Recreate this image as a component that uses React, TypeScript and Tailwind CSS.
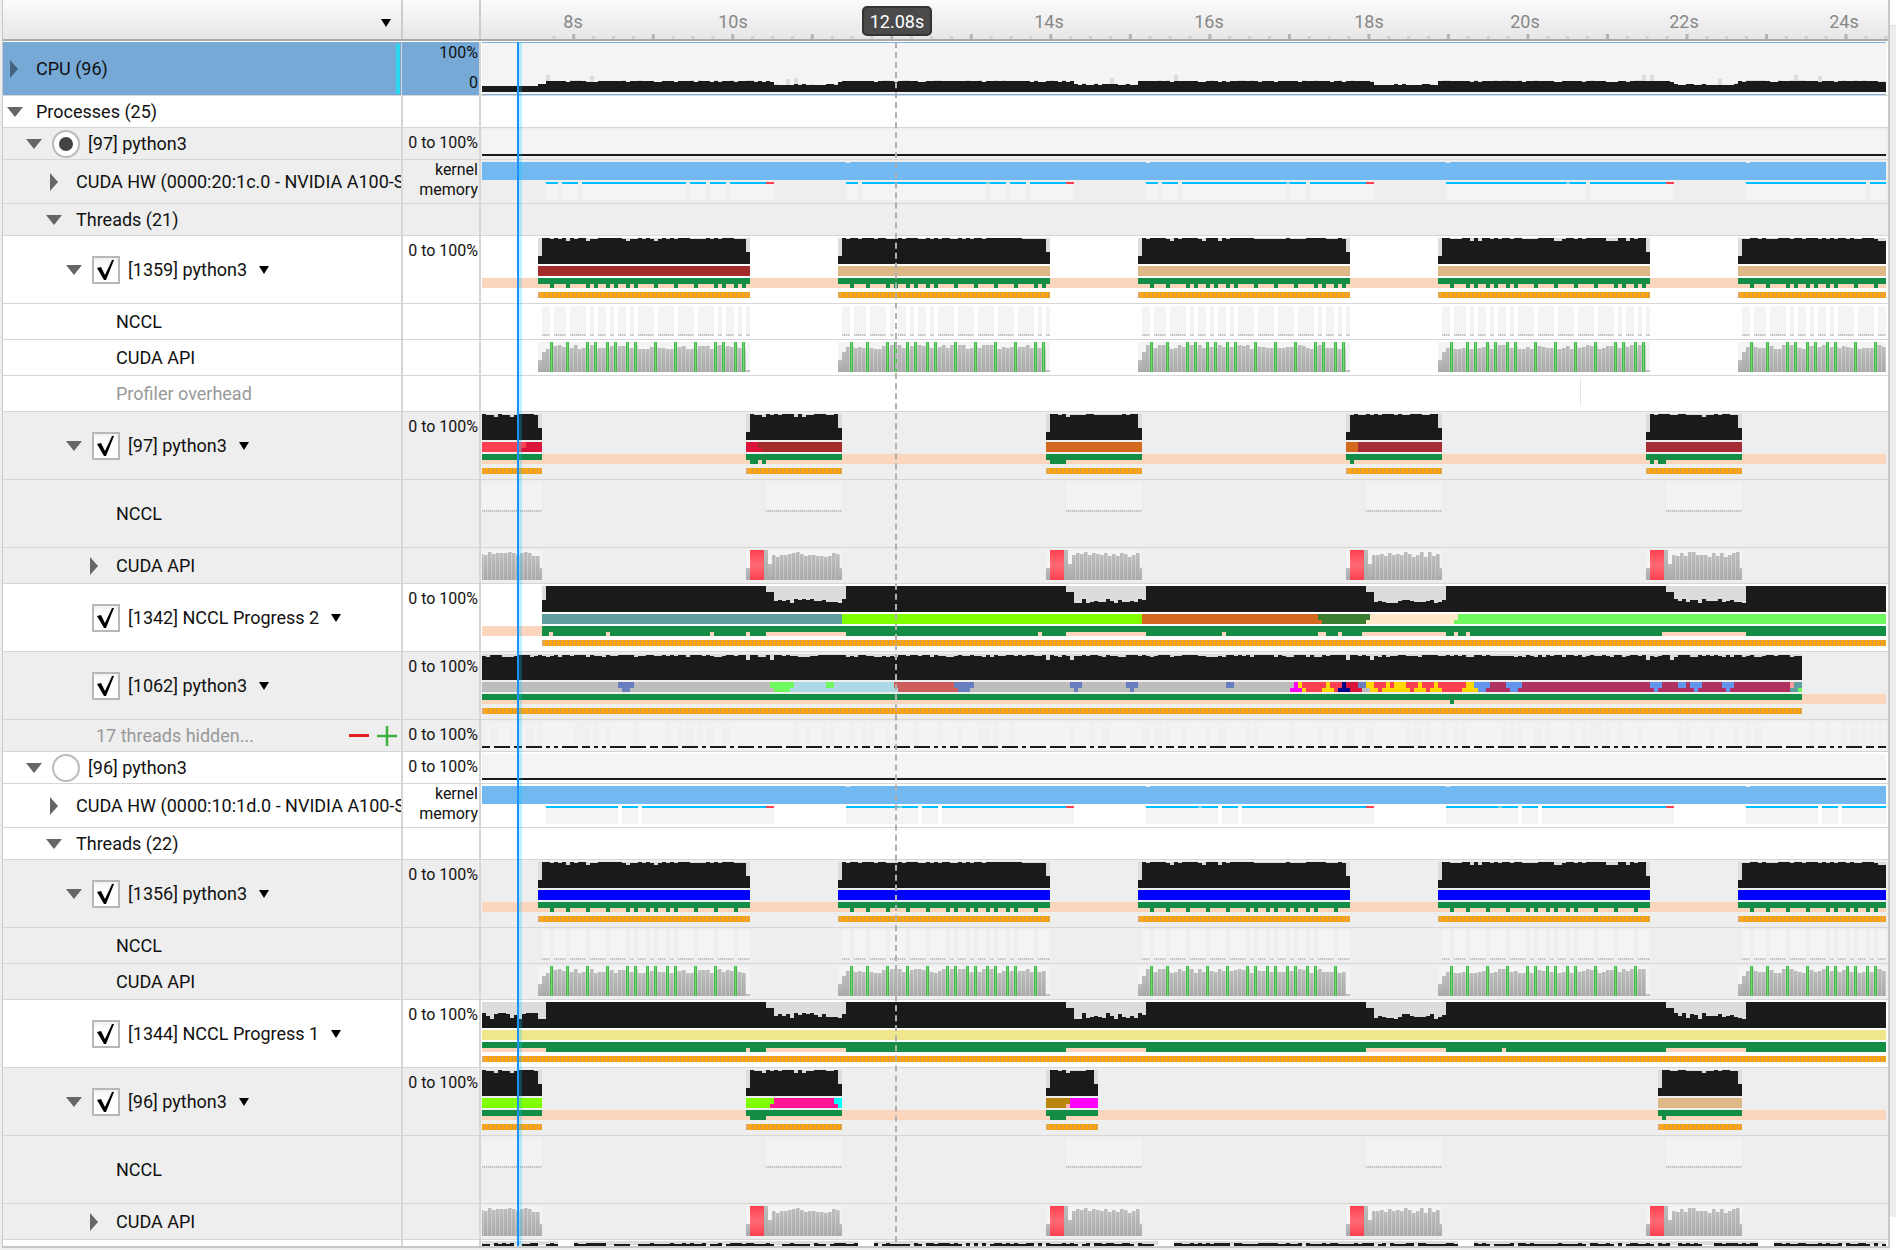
import type { ReactNode } from 'react'

type Rect = { x: number; y: number; w: number; h: number; fill: string }
type Span = [number, number, string]

const BLACK = '#1a1a1a'
const SHADE = '#dcdcdc'
const LIGHT = '#f4f4f4'
const GREEN = '#138d46'
const PEACH = '#fcd6bc'
const STEEL = '#6a7fc0'
const CORN = '#6495ed'
const MAROON = '#b03060'
const RED = '#ff4050'
const GOLD = '#ffd700'
const CRIMSON = '#dc143c'
const GRAY = '#bdbdbd'
const LEFT = 482
const RIGHT = 1886

const rnd = (i: number) => {
  const v = Math.sin(i * 12.9898) * 43758.5453
  return v - Math.floor(v)
}
const box = (x1: number, x2: number, y: number, h: number, fill: string): Rect => ({ x: x1, y, w: x2 - x1, h, fill })

// --- cols shared by NCCL / CUDA / green ticks ---
const colsFrom = (s: number, e: number, widths: number[]) => {
  const cols: [number, number][] = []
  let x = s + 4
  let i = 0
  while (x < e) {
    const w = widths[i % widths.length]
    cols.push([x, Math.min(x + w, e)])
    x += w + 4
    i++
  }
  return cols
}
const gapsOf = (cols: [number, number][]) => cols.slice(0, -1).map(([, end]) => end)

const W_A = [8, 12, 16, 4, 8, 4, 8, 4, 16, 16, 16, 16, 16, 4, 4]
const W_B = [8, 12, 4, 8, 4, 8, 4, 16, 16, 16, 16, 16, 4, 8, 4, 4]
const W_C = [8, 12, 16, 4, 8, 4, 8, 4, 16, 16, 16, 16, 4, 8, 4, 4]
const W_D = [8, 12, 16, 16, 16, 16, 4, 8, 4, 8, 4, 8, 4, 16, 12]
const W_E = [8, 12, 16, 16, 16, 4, 8, 4, 8, 4, 16, 16, 16, 12]

const LONG_BURSTS: [number, number, number[]][] = [
  [538, 750, W_C],
  [838, 1050, W_A],
  [1138, 1350, W_C],
  [1438, 1650, W_B],
  [1738, 1950, W_C],
]
const LONG_BURSTS_B: [number, number, number[]][] = [
  [538, 750, W_E],
  [838, 1050, W_D],
  [1138, 1350, W_D],
  [1438, 1650, W_E],
  [1738, 1950, W_E],
]
const SHORT_STARTS = [446, 746, 1046, 1346, 1646]

// --- pieces of a thread track ---
const blackBurst = (s: number, e: number) => {
  const out: Rect[] = [box(s, e, 2, 26, SHADE), box(s, s + 4, 20, 8, BLACK), box(e - 4, e, 16, 12, BLACK)]
  for (let x = s + 4; x < e - 4; x += 4) {
    const n = rnd(x)
    const top = n > 0.92 ? 5 : n > 0.45 ? 3 : 2
    out.push(box(x, x + 4, top, 28 - top, BLACK))
  }
  return out
}

const orange = (x1: number, x2: number) => {
  const out: Rect[] = [box(x1, x2, 56, 6, '#ffa50a')]
  for (let x = x1 - (x1 % 4) + 4; x < x2; x += 4) out.push(box(x, x + 1, 56, 6, '#c89c5c'))
  out.push(box(x1, x1 + 3, 56, 6, '#e0a850'))
  return out
}

const greenTicks = (s: number, e: number, ticks: number[]) => [
  box(s, e, 42, 6, GREEN),
  ...ticks.map((t) => box(t, t + 4, 48, 4, GREEN)),
]

const greenGaps = (x1: number, x2: number, gaps: [number, number][]) => {
  const out: Rect[] = [box(x1, x2, 42, 10, GREEN)]
  gaps.forEach(([a, b]) => out.push(box(a, b, 48, 4, PEACH)))
  return out
}

const peach = () => [box(LEFT, RIGHT, 42, 10, PEACH)]

const twoLevel = (top: Span[], bottom: Span[]) => [
  ...top.map(([a, b, c]) => box(a, b, 30, 6, c)),
  ...bottom.map(([a, b, c]) => box(a, b, 36, 4, c)),
]
const slice = (a: number, b: number, c: string) => box(a, b, 30, 10, c)

const dips = (starts: number[], jagTop: number, jagRange: number) => {
  const out: Rect[] = []
  starts.forEach((s) => {
    out.push(box(s, s + 80, 2, 26, SHADE))
    out.push(box(s, s + 8, 8, 20, BLACK))
    for (let x = s + 8; x < s + 80; x += 4) {
      const top = jagTop + Math.floor(rnd(x * 3) * jagRange)
      out.push(box(x, x + 4, top, 28 - top, BLACK))
    }
  })
  return out
}

// --- whole tracks ---
const longThread = (bursts: [number, number, number[]][], colors: string[]): Rect[] => {
  const out: Rect[] = peach()
  bursts.forEach(([s, e, widths], i) => {
    out.push(...blackBurst(s, e), slice(s, e, colors[i]))
    out.push(...greenTicks(s, e, gapsOf(colsFrom(s, e, widths))))
    out.push(...orange(s, Math.min(e, RIGHT)))
  })
  return out
}

const dots = (a: number, b: number) => {
  const out: Rect[] = [box(a, b, 30, 2, '#e2e2e2')]
  for (let x = a; x < b; x += 2) out.push(box(x, x + 1, 30, 2, '#c0c0c0'))
  return out
}

const ncclCols = (bursts: [number, number, number[]][]): Rect[] => {
  const out: Rect[] = []
  bursts.forEach(([s, e, widths]) => {
    colsFrom(s, e, widths).forEach(([a, b]) => {
      out.push(box(a, b, 2, 28, LIGHT), ...dots(a, b))
    })
  })
  return out
}

const grayBars = (a: number, b: number, minTop: number, range: number) => {
  const out: Rect[] = []
  for (let x = a; x < b; x += 4) {
    const top = minTop + Math.floor(rnd(x * 7) * range)
    out.push({ x, y: top, w: 3, h: 32 - top, fill: 'url(#barGrad)' })
    out.push({ x: x + 3, y: top, w: 1, h: 32 - top, fill: 'url(#barGradSoft)' })
  }
  return out
}

const cudaLong = (bursts: [number, number, number[]][]): Rect[] => {
  const out: Rect[] = []
  bursts.forEach(([s, e, widths]) => {
    out.push(box(s, e, 2, 30, LIGHT))
    out.push({ x: s, y: 20, w: 4, h: 12, fill: 'url(#barGrad)' })
    out.push({ x: s + 4, y: 12, w: 4, h: 20, fill: 'url(#barGrad)' })
    out.push(...grayBars(s + 8, e - 4, 5, 5))
    out.push(box(e - 4, e, 30, 2, '#c0c0c0'))
    gapsOf(colsFrom(s, e, widths)).forEach((g) => {
      out.push(box(g, g + 3, 2, 30, '#46b44e'), box(g + 1, g + 2, 2, 30, '#6cdc6c'))
    })
  })
  return out
}

const cudaShort = (): Rect[] => {
  const out: Rect[] = []
  SHORT_STARTS.forEach((s) => {
    const e = s + 96
    out.push(box(s, e, 2, 30, LIGHT))
    out.push({ x: s, y: 20, w: 4, h: 12, fill: 'url(#barGrad)' })
    out.push({ x: s + 18, y: 2, w: 4, h: 30, fill: 'url(#barGrad)' })
    out.push({ x: s + 22, y: 16, w: 4, h: 16, fill: 'url(#barGrad)' })
    out.push(...grayBars(s + 26, e - 4, 4, 6))
    out.push({ x: e - 4, y: 20, w: 4, h: 12, fill: 'url(#barGrad)' })
    out.push({ x: s + 4, y: 2, w: 14, h: 30, fill: 'url(#redGrad)' })
  })
  return out
}

const ncclShort = (starts: number[]): Rect[] => {
  const out: Rect[] = []
  starts.forEach((s) => {
    const a = s + 20
    const e = s + 96
    out.push(box(a, e, 2, 28, '#f2f2f2'), ...dots(a, e))
  })
  return out
}

const memSpans = (pattern: [number, number][], red: [number, number][], spots: number[]) => {
  const out: Rect[] = [box(LEFT, RIGHT, 2, 18, '#72b9f2')]
  ;[846, 1146, 1446, 1746].forEach((x) => out.push(box(x, x + 4, 2, 1, '#e4eef6')))
  pattern.forEach(([a, b]) => {
    out.push(box(a, b, 24, 16, LIGHT), box(a, b, 22, 2, '#00bfff'))
  })
  red.forEach(([a, b]) => out.push(box(a, b, 24, 16, LIGHT), box(a, b, 22, 2, RED)))
  spots.forEach((x) => out.push(box(x, x + 4, 22, 2, '#6fd0e0')))
  return out
}

const MEM_97: [number, number][] = [
  [546, 558], [562, 578], [582, 686], [690, 706], [710, 726], [730, 766],
  [846, 858], [862, 986], [990, 1006], [1010, 1026], [1030, 1066],
  [1146, 1158], [1162, 1178], [1182, 1286], [1290, 1306], [1310, 1366],
  [1446, 1586], [1590, 1666],
  [1746, 1866], [1870, 1886],
]
const MEM_96: [number, number][] = [
  [546, 618], [622, 638], [642, 766],
  [846, 918], [922, 938], [942, 1066],
  [1146, 1218], [1222, 1238], [1242, 1366],
  [1446, 1518], [1522, 1538], [1542, 1666],
  [1746, 1818], [1822, 1838], [1842, 1886],
]
const MEM_RED: [number, number][] = [[766, 774], [1066, 1074], [1366, 1374], [1666, 1674]]

const cpuTrack = (): Rect[] => {
  const out: Rect[] = [
    box(481, 1887, 0, 1, '#7db0dd'),
    box(481, 1887, 52, 1, '#7db0dd'),
    box(LEFT, RIGHT, 1, 51, LIGHT),
    box(481, 482, 0, 53, '#7db0dd'),
    box(1886, 1887, 0, 53, '#7db0dd'),
  ]
  for (let x = LEFT; x < RIGHT; x += 4) {
    const phase = (x - 538 + 600) % 300
    const n = rnd(x)
    const h = x < 538 ? 6 : x < 546 ? 8 : phase < 236 ? (n > 0.8 ? 10 : 11) : n > 0.7 ? 8 : 7
    const m = rnd(x * 5)
    const extra = x < 546 ? 0 : m > 0.985 ? 6 : m > 0.7 ? 1 : 0
    out.push(box(x, x + 4, 50 - h - extra, extra, SHADE), box(x, x + 4, 50 - h, h, BLACK))
  }
  return out
}

const processLine = (y: number): Rect[] => [box(LEFT, RIGHT, 2, y - 2, LIGHT), box(LEFT, RIGHT, y, 2, BLACK)]

const hiddenTrack = (): Rect[] => {
  const out: Rect[] = [box(LEFT, RIGHT, 2, 28, '#f3f3f3')]
  for (let x = LEFT; x < RIGHT; x += 4) if (rnd(x * 2) > 0.7) out.push(box(x, x + 4, 2, 24, '#f0f0f0'))
  let x = LEFT
  let i = 0
  while (x < RIGHT) {
    const w = rnd(i) > 0.55 ? 16 : rnd(i) > 0.25 ? 4 : 8
    out.push(box(x, x + w, 26, 2, BLACK))
    x += w + 4
    i++
  }
  return out
}

const bottomTrack = (): Rect[] => {
  const out: Rect[] = []
  for (let x = LEFT; x < RIGHT; x += 4) {
    const n = rnd(x * 11)
    if ((x + 300 * 9 - 1458) % 300 < 16) continue
    out.push(box(x, x + 4, 1, 4, SHADE))
    if (n > 0.15) out.push(box(x, x + 4, n > 0.6 ? 3 : 4, n > 0.6 ? 3 : 2, BLACK))
  }
  return out
}

// [1062] python3 slices are read off the picture
const z = (v: number) => 1220 + v / 3
const chain = (start: number, stops: [number, string][]): Span[] => {
  let prev = start
  return stops.map(([end, c]) => {
    const s: Span = [z(prev), z(end), c]
    prev = end
    return s
  })
}
const TOP_1062: Span[] = [
  [482, 1294, GRAY], [618, 634, STEEL], [770, 794, '#70f85f'], [794, 896, '#add8e6'], [826, 834, '#70f85f'],
  [894, 954, '#cd5c5c'], [954, 974, STEEL], [1070, 1082, STEEL], [1126, 1138, STEEL], [1226, 1234, STEEL],
  ...chain(222, [[234, '#ff00ff'], [246, GOLD], [318, RED], [330, GOLD], [366, RED], [378, '#00008b'], [414, CRIMSON], [438, STEEL],
    [462, GOLD], [498, RED], [510, GOLD], [522, RED], [558, GOLD], [594, RED], [606, GOLD], [642, RED], [654, GOLD], [738, RED], [762, GOLD],
    [810, CORN], [858, MAROON], [906, CORN], [1290, MAROON], [1326, CORN], [1374, MAROON], [1398, CORN], [1410, MAROON], [1446, CORN], [1506, MAROON], [1542, CORN]]),
  [1734, 1790, MAROON], [1790, 1794, '#ff9aa2'], [1794, 1802, '#5f9ea0'],
]
const BOTTOM_1062: Span[] = [
  [482, 1290, GRAY], [622, 630, STEEL], [774, 790, '#70f85f'], [790, 898, '#add8e6'], [898, 958, '#cd5c5c'], [958, 970, STEEL],
  [1074, 1078, STEEL], [1130, 1134, STEEL],
  ...chain(210, [[246, '#ff00ff'], [258, GOLD], [306, RED], [342, GOLD], [354, RED], [390, '#00008b'], [426, CRIMSON], [450, GRAY],
    [474, GOLD], [486, RED], [570, GOLD], [582, RED], [618, GOLD], [630, RED], [666, GOLD], [726, RED], [774, GOLD],
    [798, CORN], [870, MAROON], [894, CORN], [1302, MAROON], [1314, CORN], [1422, MAROON], [1434, CORN], [1518, MAROON], [1530, CORN]]),
  [1730, 1790, MAROON], [1790, 1798, '#5f9ea0'], [1798, 1802, '#70f85f'],
]

const track1062 = (): Rect[] => {
  const out: Rect[] = [box(LEFT, 1802, 2, 26, SHADE)]
  for (let x = LEFT; x < 1802; x += 4) {
    const n = rnd(x * 9)
    const dip = (x - 446) % 300 === 0 || (x - 470) % 300 === 0
    const top = dip ? 8 : n > 0.6 ? 3 : n > 0.25 ? 4 : 5
    out.push(box(x, x + 4, top, 28 - top, BLACK))
  }
  out.push(...twoLevel(TOP_1062, BOTTOM_1062), ...peach(), box(LEFT, 1802, 42, 6, GREEN), box(1450, 1454, 48, 4, GREEN), ...orange(LEFT, 1802))
  return out
}

const track1342 = (): Rect[] => [
  ...peach(),
  box(542, RIGHT, 2, 26, BLACK),
  box(542, 546, 2, 14, SHADE),
  ...dips([766, 1066, 1366, 1666], 15, 5),
  ...twoLevel(
    [[542, 842, '#5f9ea0'], [842, 1142, '#7fff00'], [1142, 1318, '#d2691e'], [1318, 1370, '#3a7d2f'], [1370, 1458, '#ffe8c8'], [1458, RIGHT, '#70f85f']],
    [[542, 842, '#5f9ea0'], [842, 1142, '#7fff00'], [1142, 1322, '#d2691e'], [1322, 1366, '#3a7d2f'], [1366, 1454, '#ffe8c8'], [1454, RIGHT, '#70f85f']],
  ),
  ...greenGaps(542, RIGHT, [[549, 553], [606, 610], [710, 714], [746, 750], [766, 846], [1038, 1042], [1066, 1146], [1222, 1226], [1318, 1326], [1338, 1342], [1362, 1446], [1454, 1458], [1466, 1470], [1662, 1746]]),
  ...orange(542, RIGHT),
]

const track1344 = (): Rect[] => [
  box(LEFT, RIGHT, 2, 26, BLACK),
  box(LEFT, 546, 2, 26, SHADE),
  ...dips([466, 766, 1066, 1366, 1666], 13, 7),
  slice(LEFT, RIGHT, '#f0e68c'),
  ...greenGaps(LEFT, RIGHT, [[482, 546], [746, 750], [766, 846], [1066, 1146], [1366, 1446], [1502, 1506], [1666, 1746]]),
  ...orange(LEFT, RIGHT),
]

const track97 = (): Rect[] => [
  ...peach(),
  ...SHORT_STARTS.flatMap((s) => [...blackBurst(s, s + 96), ...orange(s, s + 96), box(s, s + 96, 42, 6, GREEN)]),
  ...twoLevel(
    [[446, 526, RED], [526, 542, CRIMSON], [746, 758, CRIMSON], [758, 842, '#a52a2a'], [1046, 1142, '#d2691e'], [1346, 1358, '#d2691e'], [1358, 1442, '#a82c36'], [1646, 1742, '#a82c36']],
    [[446, 521, RED], [521, 542, CRIMSON], [746, 762, CRIMSON], [762, 842, '#a52a2a'], [1046, 1142, '#d2691e'], [1346, 1358, '#d2691e'], [1358, 1442, '#a82c36'], [1646, 1742, '#a82c36']],
  ),
  box(750, 758, 48, 4, GREEN), box(762, 766, 48, 4, GREEN), box(1050, 1066, 48, 4, GREEN),
  box(1350, 1354, 48, 4, GREEN), box(1650, 1654, 48, 4, GREEN), box(1658, 1666, 48, 4, GREEN),
]

const track96 = (): Rect[] => {
  const bursts: [number, number][] = [[446, 542], [746, 842], [1046, 1098], [1658, 1742]]
  return [
    ...peach(),
    ...bursts.flatMap(([s, e]) => [...blackBurst(s, e), ...orange(s, e), box(s, e, 42, 6, GREEN)]),
    ...twoLevel(
      [[446, 542, '#7fff00'], [746, 774, '#7fff00'], [774, 834, '#ff1493'], [834, 842, '#00ffff'], [1046, 1070, '#b8860b'], [1070, 1098, '#ff00ff'], [1658, 1742, '#deb887']],
      [[446, 542, '#7fff00'], [746, 770, '#7fff00'], [770, 838, '#ff1493'], [838, 842, '#00ffff'], [1046, 1066, '#b8860b'], [1066, 1070, '#ffb6c1'], [1070, 1098, '#ff00ff'], [1658, 1742, '#deb887']],
    ),
    box(750, 766, 48, 4, GREEN), box(1050, 1066, 48, 4, GREEN), box(1662, 1666, 48, 4, GREEN),
  ]
}

const TRACKS = {
  cpu: cpuTrack(),
  hidden: hiddenTrack(),
  bottom: bottomTrack(),
  t1359: longThread(LONG_BURSTS, ['#a52a2a', '#deb887', '#deb887', '#deb887', '#deb887']),
  t1356: longThread(LONG_BURSTS_B, ['#0000ff', '#0000ff', '#0000ff', '#0000ff', '#0000ff']),
  nccl1359: ncclCols(LONG_BURSTS),
  nccl1356: ncclCols(LONG_BURSTS_B),
  cuda1359: cudaLong(LONG_BURSTS),
  cuda1356: cudaLong(LONG_BURSTS_B),
  cudaShort: cudaShort(),
  ncclShort: ncclShort(SHORT_STARTS),
  t97: track97(),
  t96: track96(),
  t1342: track1342(),
  t1344: track1344(),
  t1062: track1062(),
}

function Track({ rects, height }: { rects: Rect[]; height: number }) {
  return (
    <svg width={1404} height={height} viewBox={`482 0 1404 ${height}`} shapeRendering="crispEdges" className="block">
      {rects.map((r, i) => (
        <rect key={i} x={r.x} y={r.y} width={r.w} height={r.h} fill={r.fill} />
      ))}
    </svg>
  )
}

function TriDown() {
  return (
    <svg width="16" height="10" viewBox="0 0 16 10">
      <polygon points="0,0 16,0 8,10" fill="#666666" />
    </svg>
  )
}

function TriRight({ fill = '#666666' }: { fill?: string }) {
  return (
    <svg width="8" height="18" viewBox="0 0 8 18">
      <polygon points="0,0 8,9 0,18" fill={fill} />
    </svg>
  )
}

function Caret({ className }: { className: string }) {
  return (
    <svg width="10" height="8" viewBox="0 0 10 8" className={className}>
      <polygon points="0,0 10,0 5,8" fill="#000000" />
    </svg>
  )
}

function Check() {
  return (
    <div className="flex h-7 w-7 shrink-0 items-center justify-center border-2 border-[#b8b8b8] bg-gradient-to-b from-[#f0f0f0] to-white to-30%">
      <svg width="24" height="24" viewBox="0 0 24 24">
        <polygon points="3,10 7,9 11,17 18,2 20,2 12,22 10,22" fill="#000000" />
      </svg>
    </div>
  )
}

function Radio({ on }: { on?: boolean }) {
  return (
    <div className="flex h-7 w-7 shrink-0 items-center justify-center rounded-full border-2 border-[#bbbbbb] bg-white">
      {on && <div className="h-[14px] w-[14px] rounded-full bg-[#444444]" />}
    </div>
  )
}

function Row({
  height,
  shade,
  name,
  label,
  rects,
  heightClass,
}: {
  height: number
  heightClass: string
  shade?: boolean
  name: ReactNode
  label?: ReactNode
  rects?: Rect[]
}) {
  return (
    <div className={`flex ${heightClass} border-b border-[#d6d6d6] ${shade ? 'bg-[#eeeeee]' : 'bg-white'}`}>
      <div className="flex w-[400px] shrink-0 items-center overflow-hidden whitespace-nowrap border-r-2 border-[#d6d6d6] text-[18px]">
        {name}
      </div>
      <div className="w-[78px] shrink-0 border-r-2 border-[#d6d6d6] pr-px pt-[5px] text-right text-[16px] leading-[20px] text-[#111111]">
        {label}
      </div>
      <div className="flex-1 pl-px">{rects && <Track rects={rects} height={height - 1} />}</div>
    </div>
  )
}

function ThreadName({ text, tri }: { text: string; tri?: boolean }) {
  return (
    <div className={`flex items-center ${tri ? 'pl-[63px]' : 'pl-[89px]'}`}>
      {tri && (
        <div className="w-[26px]">
          <TriDown />
        </div>
      )}
      <Check />
      <span className="ml-2">{text}</span>
      <Caret className="ml-[12px]" />
    </div>
  )
}

function Sub({ text, tri, muted }: { text: string; tri?: boolean; muted?: boolean }) {
  return (
    <div className={`flex items-center ${tri ? 'pl-[87px]' : 'pl-[113px]'} ${muted ? 'text-[#999999]' : ''}`}>
      {tri && (
        <div className="w-[26px]">
          <TriRight />
        </div>
      )}
      <span>{text}</span>
    </div>
  )
}

function Process({ text, on }: { text: string; on?: boolean }) {
  return (
    <div className="flex items-center pl-[23px]">
      <div className="w-[26px]">
        <TriDown />
      </div>
      <Radio on={on} />
      <span className="ml-2">{text}</span>
    </div>
  )
}

function Hw({ text }: { text: string }) {
  return (
    <div className="flex items-center pl-[47px]">
      <div className="w-[26px]">
        <TriRight />
      </div>
      <span>{text}</span>
    </div>
  )
}

function Threads({ text }: { text: string }) {
  return (
    <div className="flex items-center pl-[43px]">
      <div className="w-[30px]">
        <TriDown />
      </div>
      <span>{text}</span>
    </div>
  )
}

const TIME_LABELS: [string, number][] = [
  ['8s', 573],
  ['10s', 733],
  ['14s', 1049],
  ['16s', 1209],
  ['18s', 1369],
  ['20s', 1525],
  ['22s', 1684],
  ['24s', 1844],
]

function Ruler() {
  // page x of a time, the ruler itself starts at x = 481
  const x = (t: number) => 573.7 + 79.52 * (t - 8) - 481
  const ticks: { at: number; major: boolean }[] = []
  for (let i = -1; i < 72; i++) ticks.push({ at: x(8 + i / 4), major: i % 4 === 0 })
  return (
    <div className="relative flex-1">
      <svg width="1407" height="39" className="block">
        {ticks.map((t, i) =>
          t.major ? (
            <rect key={i} x={t.at - 1.5} y={34} width={3} height={5} fill="#b4b4b4" />
          ) : (
            <rect key={i} x={t.at - 1.5} y={36} width={3} height={3} fill="#d0d0d0" />
          ),
        )}
      </svg>
      {TIME_LABELS.map(([text, at]) => (
        <span
          key={text}
          className="absolute top-[10px] -translate-x-1/2 text-[18px] leading-[24px] text-[#888888]"
          style={{ left: at - 481 }}
        >
          {text}
        </span>
      ))}
    </div>
  )
}

const KernelLabel = (
  <div className="-mt-[5px]">
    kernel
    <br />
    memory
  </div>
)

export default function App() {
  return (
    <div className="relative flex h-[1250px] w-[1896px] overflow-hidden bg-[#eeeeee] font-['Roboto',sans-serif] text-[#111111]">
      <svg width="0" height="0" className="absolute">
        <defs>
          <linearGradient id="barGrad" x1="0" y1="0" x2="0" y2="1">
            <stop offset="0" stopColor="#bdbdbd" />
            <stop offset="1" stopColor="#aaaaaa" />
          </linearGradient>
          <linearGradient id="barGradSoft" x1="0" y1="0" x2="0" y2="1">
            <stop offset="0" stopColor="#d2d2d2" />
            <stop offset="1" stopColor="#bebebe" />
          </linearGradient>
          <linearGradient id="redGrad" x1="0" y1="0" x2="0" y2="1">
            <stop offset="0" stopColor="#ff4050" />
            <stop offset="0.5" stopColor="#ff6a74" />
            <stop offset="1" stopColor="#ff4050" />
          </linearGradient>
        </defs>
      </svg>

      <div className="ml-[2px] h-[1248px] w-[1888px] shrink-0 border-x border-b-2 border-[#c8c8c8] border-r-2 bg-white">
        <div className="flex h-[41px] border-b-2 border-[#aaaaaa] bg-gradient-to-b from-[#fbfbfb] to-[#e6e6e6]">
          <div className="flex w-[400px] shrink-0 items-center justify-end border-r-2 border-[#cccccc] pr-[10px] pt-[6px]">
            <Caret className="" />
          </div>
          <div className="w-[78px] shrink-0 border-r-2 border-[#cccccc]" />
          <Ruler />
        </div>
        <div className="h-px" />

        <Row
          height={54}
          heightClass="h-[54px]"
          name={
            <div className="flex h-full w-full items-center bg-[#76a9d6] pl-[7px]">
              <div className="w-[26px]">
                <TriRight fill="#44627e" />
              </div>
              <span>CPU (96)</span>
              <div className="ml-auto mr-px h-[50px] w-[4px] bg-[#2ad8f0]" />
            </div>
          }
          label={
            <div className="-mx-px -mt-[5px] flex h-[53px] flex-col justify-between bg-[#76a9d6] pb-[2px] pr-px pt-px">
              <span>100%</span>
              <span>0</span>
            </div>
          }
          rects={TRACKS.cpu}
        />
        <Row
          height={32}
          heightClass="h-[32px]"
          name={
            <div className="flex items-center pl-[4px]">
              <div className="w-[29px]">
                <TriDown />
              </div>
              <span>Processes (25)</span>
            </div>
          }
        />
        <Row height={32} heightClass="h-[32px]" shade name={<Process text="[97] python3" on />} label="0 to 100%" rects={processLine(26)} />
        <Row height={44} heightClass="h-[44px]" shade name={<Hw text="CUDA HW (0000:20:1c.0 - NVIDIA A100-SXM4-40GB)" />} label={KernelLabel} rects={memSpans(MEM_97, MEM_RED, [986, 1286, 1566])} />
        <Row height={32} heightClass="h-[32px]" shade name={<Threads text="Threads (21)" />} />
        <Row height={68} heightClass="h-[68px]" name={<ThreadName text="[1359] python3" tri />} label="0 to 100%" rects={TRACKS.t1359} />
        <Row height={36} heightClass="h-[36px]" name={<Sub text="NCCL" />} rects={TRACKS.nccl1359} />
        <Row height={36} heightClass="h-[36px]" name={<Sub text="CUDA API" />} rects={TRACKS.cuda1359} />
        <Row height={36} heightClass="h-[36px]" name={<Sub text="Profiler overhead" muted />} rects={[box(1580, 1581, 2, 28, '#e6e6e6')]} />
        <Row height={68} heightClass="h-[68px]" shade name={<ThreadName text="[97] python3" tri />} label="0 to 100%" rects={TRACKS.t97} />
        <Row height={68} heightClass="h-[68px]" shade name={<Sub text="NCCL" />} rects={TRACKS.ncclShort} />
        <Row height={36} heightClass="h-[36px]" shade name={<Sub text="CUDA API" tri />} rects={TRACKS.cudaShort} />
        <Row height={68} heightClass="h-[68px]" name={<ThreadName text="[1342] NCCL Progress 2" />} label="0 to 100%" rects={TRACKS.t1342} />
        <Row height={68} heightClass="h-[68px]" shade name={<ThreadName text="[1062] python3" />} label="0 to 100%" rects={TRACKS.t1062} />
        <Row
          height={32}
          heightClass="h-[32px]"
          shade
          name={
            <div className="flex w-full items-center pl-[93px] pr-[4px] text-[#999999]">
              <span>17 threads hidden...</span>
              <div className="ml-auto h-[3px] w-5 bg-[#e62020]" />
              <svg width="20" height="20" viewBox="0 0 20 20" className="ml-2">
                <path d="M0 10 H20 M10 0 V20" stroke="#3db03d" strokeWidth="2.5" />
              </svg>
            </div>
          }
          label="0 to 100%"
          rects={TRACKS.hidden}
        />
        <Row height={32} heightClass="h-[32px]" name={<Process text="[96] python3" />} label="0 to 100%" rects={processLine(26)} />
        <Row height={44} heightClass="h-[44px]" name={<Hw text="CUDA HW (0000:10:1d.0 - NVIDIA A100-SXM4-40GB)" />} label={KernelLabel} rects={memSpans(MEM_96, MEM_RED, [898, 1198, 1498])} />
        <Row height={32} heightClass="h-[32px]" name={<Threads text="Threads (22)" />} />
        <Row height={68} heightClass="h-[68px]" shade name={<ThreadName text="[1356] python3" tri />} label="0 to 100%" rects={TRACKS.t1356} />
        <Row height={36} heightClass="h-[36px]" shade name={<Sub text="NCCL" />} rects={TRACKS.nccl1356} />
        <Row height={36} heightClass="h-[36px]" shade name={<Sub text="CUDA API" />} rects={TRACKS.cuda1356} />
        <Row height={68} heightClass="h-[68px]" name={<ThreadName text="[1344] NCCL Progress 1" />} label="0 to 100%" rects={TRACKS.t1344} />
        <Row height={68} heightClass="h-[68px]" shade name={<ThreadName text="[96] python3" tri />} label="0 to 100%" rects={TRACKS.t96} />
        <Row height={68} heightClass="h-[68px]" shade name={<Sub text="NCCL" />} rects={TRACKS.ncclShort} />
        <Row height={36} heightClass="h-[36px]" shade name={<Sub text="CUDA API" tri />} rects={TRACKS.cudaShort} />
        <div className="flex h-[6px]">
          <div className="w-[400px] shrink-0 border-r-2 border-[#d6d6d6]" />
          <div className="w-[78px] shrink-0 border-r-2 border-[#d6d6d6]" />
          <div className="flex-1 pl-px">
            <Track rects={TRACKS.bottom} height={6} />
          </div>
        </div>
      </div>

      <div className="flex flex-1 flex-col">
        <div className="h-[26px] border-b border-[#dddddd] bg-white" />
        <div className="flex-1" />
        <div className="h-[33px] bg-white" />
      </div>

      {/* cursor, hover line and time badge sit over the tracks */}
      <div className="absolute left-[517px] top-[42px] h-[1204px] w-[2px] bg-[#1e90ff]" />
      <div className="absolute left-[519px] top-[42px] h-[1204px] w-[3px] bg-[#00c8ff]/25" />
      <div className="absolute left-[895px] top-[42px] h-[1200px] border-l-2 border-dashed border-[#b0b0b0]" />
      <div className="absolute left-[862px] top-[6px] flex h-[30px] w-[70px] items-center justify-center rounded-[5px] border-2 border-[#333333] bg-[#4a4a4a] text-[18px] text-white">
        12.08s
      </div>
    </div>
  )
}
